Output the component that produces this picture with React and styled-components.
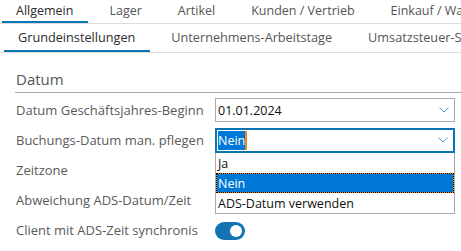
import React from 'react'
import styled, { createGlobalStyle } from 'styled-components'

const Global = createGlobalStyle`
  html, body { margin: 0; padding: 0; background: #fff; }
  body {
    font-family: "Open Sans", "Noto Sans", sans-serif;
    font-size: 12px;
    overflow: hidden;
  }
`

const Page = styled.div`
  width: 461px;
  height: 251px;
  overflow: hidden;
  white-space: nowrap;
`

const TabBar = styled.div`
  display: flex;
  gap: 7px;
  height: ${p => p.height}px;
  border-bottom: 1px solid #dcdcdc;
  padding-left: ${p => p.indent}px;
  overflow: hidden;
`

const Tab = styled.div`
  display: flex;
  align-items: center;
  padding: 0 15px ${p => p.padBottom || 0}px 14px;
  font-size: ${p => p.size || 13}px;
  color: ${p => (p.active ? '#2b2b2b' : '#555')};
  border-bottom: 3px solid ${p => (p.active ? '#0a74b4' : 'transparent')};
  margin-bottom: -1px;
  flex-shrink: 0;
`

const Content = styled.div`
  padding: 0 0 0 15px;
`

const Heading = styled.div`
  font-size: 15px;
  color: #555;
  padding: 16px 0 3px 1px;
  border-bottom: 1px solid #a6a6a6;
`

const Form = styled.div`
  display: grid;
  grid-template-columns: 200px 240px;
  grid-auto-rows: 30px;
  padding-top: 2px;
`

const Label = styled.div`
  display: flex;
  align-items: center;
  padding-left: 1px;
  color: #5a5a5a;
  font-size: 13px;
`

const Cell = styled.div`
  position: relative;
  display: flex;
  align-items: center;
`

const Select = styled.div`
  box-sizing: border-box;
  width: 240px;
  height: ${p => (p.focused ? 25 : 24)}px;
  display: flex;
  align-items: center;
  justify-content: space-between;
  border: ${p => (p.focused ? '2px solid #0a74b4' : '1px solid #a9a9a9')};
  padding: 0 5px 0 ${p => (p.focused ? 1 : 2)}px;
  color: #111;
  font-size: 12.5px;
  background: #fff;
`

const Selected = styled.span`
  background: #0078d7;
  color: #fff;
  padding: 1px 0;
  border-right: 2px solid #e98a1f;
`

const Chevron = () => (
  <svg width="10" height="6" viewBox="0 0 10 6">
    <path d="M0.5 0.8 L5 5 L9.5 0.8" fill="none" stroke="#4a98d6" strokeWidth="1" />
  </svg>
)

const List = styled.div`
  position: absolute;
  left: 0;
  top: 28px;
  width: 240px;
  box-sizing: border-box;
  border: 1px solid #a9a9a9;
  border-top: none;
  background: #fff;
  z-index: 2;
`

const Option = styled.div`
  height: 20px;
  display: flex;
  align-items: center;
  padding-left: 2px;
  font-size: 12.5px;
  color: ${p => (p.active ? '#fff' : '#111')};
  background: ${p => (p.active ? '#0078d7' : 'transparent')};
  box-sizing: border-box;
  ${p => p.active && `
    outline: 1px dotted #000;
    outline-offset: -1px;
    box-shadow: inset 0 0 0 1px #e98a1f;
  `}
`

const Switch = styled.div`
  width: 30px;
  height: 18px;
  border-radius: 9px;
  background: #1473b3;
  position: relative;
  margin-top: 1px;
  &::after {
    content: '';
    position: absolute;
    right: 3px;
    top: 3px;
    width: 12px;
    height: 12px;
    border-radius: 50%;
    background: #fff;
  }
`

export default function App() {
  return (
    <Page>
      <Global />
      <TabBar height={23} indent={2}>
        <Tab active size={12.5}>Allgemein</Tab>
        <Tab size={12.5}>Lager</Tab>
        <Tab size={12.5}>Artikel</Tab>
        <Tab size={12.5}>Kunden / Vertrieb</Tab>
        <Tab size={12.5}>Einkauf / Wareneingang</Tab>
      </TabBar>
      <TabBar height={28} indent={4}>
        <Tab active size={12.7} padBottom={1}>Grundeinstellungen</Tab>
        <Tab size={12.7} padBottom={1}>Unternehmens-Arbeitstage</Tab>
        <Tab size={12.7} padBottom={1}>Umsatzsteuer-Sätze</Tab>
      </TabBar>
      <Content>
        <Heading>Datum</Heading>
        <Form>
          <Label>Datum Geschäftsjahres-Beginn</Label>
          <Cell>
            <Select>
              <span>01.01.2024</span>
              <Chevron />
            </Select>
          </Cell>
          <Label>Buchungs-Datum man. pflegen</Label>
          <Cell>
            <Select focused>
              <Selected>Nein</Selected>
              <Chevron />
            </Select>
            <List>
              <Option>Ja</Option>
              <Option active>Nein</Option>
              <Option>ADS-Datum verwenden</Option>
            </List>
          </Cell>
          <Label>Zeitzone</Label>
          <Cell />
          <Label>Abweichung ADS-Datum/Zeit</Label>
          <Cell />
          <Label>Client mit ADS-Zeit synchronis</Label>
          <Cell>
            <Switch />
          </Cell>
        </Form>
      </Content>
    </Page>
  )
}
